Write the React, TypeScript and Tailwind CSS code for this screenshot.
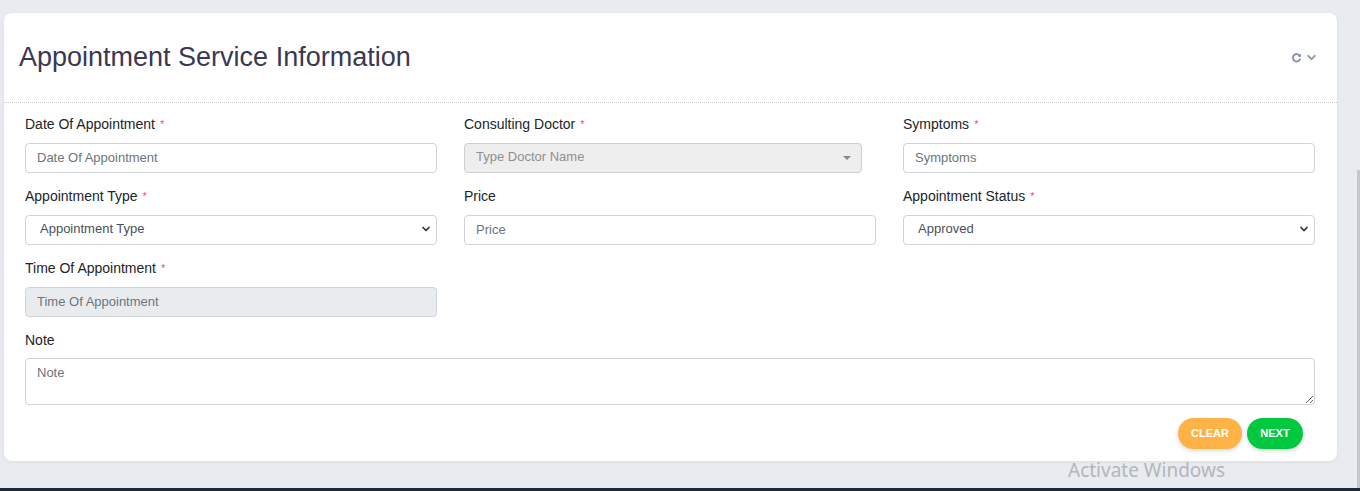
import { ChevronDown } from "lucide-react";

const FIELD_W = "w-[412px]";

function Req() {
  return <span className="ml-[5px] text-[11px] text-[#f0506e]">*</span>;
}

function Label({ text, required }: { text: string; required?: boolean }) {
  return (
    <label className="mb-[9px] flex h-5 items-center text-[14px] text-[#212529]">
      {text}
      {required ? <Req /> : null}
    </label>
  );
}

function TextInput({ placeholder, disabled }: { placeholder: string; disabled?: boolean }) {
  return (
    <input
      placeholder={placeholder}
      disabled={disabled}
      className={`h-[30px] w-full rounded-[4px] border border-[#ced4da] px-[11px] pb-[2px] text-[13px] text-[#495057] outline-none placeholder:text-[#6c757d] ${
        disabled ? "bg-[#e9ecef]" : "bg-white"
      }`}
    />
  );
}

function SelectBox({ value }: { value: string }) {
  return (
    <div className="relative h-[30px] w-full">
      <select
        defaultValue={value}
        className="h-full w-full appearance-none rounded-[4px] border border-[#ced4da] bg-white pb-[2px] pl-[14px] text-[13px] text-[#495057] outline-none"
      >
        <option>{value}</option>
      </select>
      <ChevronDown
        className="pointer-events-none absolute right-[5px] top-[8px] h-3 w-3 text-[#333]"
        strokeWidth={3.5}
      />
    </div>
  );
}

export default function App() {
  return (
    <div
      className="relative h-[491px] w-full overflow-hidden bg-[#e8ebef]"
      style={{ fontFamily: '"Liberation Sans", Arial, sans-serif' }}
    >
      <div className="pl-[4px] pr-[23px] pt-[13px]">
        <div className="rounded-[8px] bg-white shadow-[0_1px_4px_rgba(0,0,0,0.06)]">
          {/* header */}
          <div className="flex h-[90px] items-center justify-between border-b border-dotted border-[#c9c9c9] pl-[15px] pr-[19px]">
            <h1 className="pb-[1px] text-[27px] leading-none text-[#3a3852]">Appointment Service Information</h1>
            <div className="flex items-center gap-[3px] text-[#8c97ab]">
              <svg width="11" height="11" viewBox="0 0 12 12" fill="none">
                <path d="M9.6 4.2A4 4 0 1 0 9.8 8" stroke="currentColor" strokeWidth="2.2" strokeLinecap="round" />
                <path d="M11 1.5 L11 5.2 L7.4 5.2 Z" fill="currentColor" />
              </svg>
              <ChevronDown className="h-[13px] w-[13px]" strokeWidth={3.5} />
            </div>
          </div>

          {/* form */}
          <div className="px-[21px] pb-[12px] pt-[11px]">
            <div className="grid grid-cols-[412px_412px_412px] gap-x-[27px] gap-y-[13px]">
              <div>
                <Label text="Date Of Appointment" required />
                <TextInput placeholder="Date Of Appointment" />
              </div>
              <div>
                <Label text="Consulting Doctor" required />
                <div className="relative flex h-[30px] w-[398px] items-center rounded-[4px] border border-[#cfcfcf] bg-[#eeeeee] pb-[2px] pl-[11px] text-[13px] text-[#8f8f8f]">
                  Type Doctor Name
                  <span className="absolute right-[10px] top-[12px] h-0 w-0 border-x-[4px] border-t-[4px] border-x-transparent border-t-[#888]" />
                </div>
              </div>
              <div>
                <Label text="Symptoms" required />
                <TextInput placeholder="Symptoms" />
              </div>

              <div>
                <Label text="Appointment Type" required />
                <SelectBox value="Appointment Type" />
              </div>
              <div>
                <Label text="Price" />
                <TextInput placeholder="Price" />
              </div>
              <div>
                <Label text="Appointment Status" required />
                <SelectBox value="Approved" />
              </div>

              <div className={FIELD_W}>
                <Label text="Time Of Appointment" required />
                <TextInput placeholder="Time Of Appointment" disabled />
              </div>
              <div />
              <div />

              <div className="col-span-3">
                <label className="mb-[8px] flex h-5 items-center text-[14px] text-[#212529]">Note</label>
                <textarea
                  placeholder="Note"
                  className="block h-[47px] w-full rounded-[4px] border border-[#ced4da] px-[11px] pt-[4px] text-[13px] outline-none placeholder:text-[#6c757d]"
                />
              </div>
            </div>

            <div className="mt-[13px] flex justify-end gap-[5px] pr-[13px]">
              <button className="h-[31px] w-[64px] rounded-full bg-[#ffb347] text-[11px] font-bold text-white shadow-[0_2px_4px_rgba(0,0,0,0.15)]">
                CLEAR
              </button>
              <button className="h-[31px] w-[56px] rounded-full bg-[#00c93f] text-[11px] font-bold text-white shadow-[0_2px_4px_rgba(0,0,0,0.15)]">
                NEXT
              </button>
            </div>
          </div>
        </div>
      </div>

      {/* scrollbar edge + taskbar */}
      <div className="absolute right-0 top-[170px] h-[318px] w-[3px] bg-[#c4c7cc]" />
      <div className="absolute bottom-0 left-0 h-[3px] w-full bg-[#1e2937]" />
      <div
        className="pointer-events-none absolute left-[1068px] top-[456px] text-[19px] text-[#b3b6ba]"
        style={{ fontFamily: '"Noto Sans", sans-serif' }}
      >
        Activate Windows
      </div>
    </div>
  );
}
